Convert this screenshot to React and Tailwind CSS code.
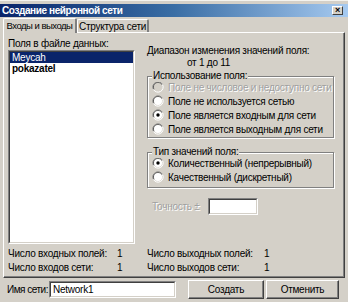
import React from 'react';

const font = { fontFamily: '"Liberation Sans", Arial, sans-serif' };

const Radio = ({ checked, disabled }) => (
  <svg width="12" height="12" viewBox="0 0 12 12" className="shrink-0">
    <path d="M10.5 3.5A5 5 0 0 0 1.5 8.5" fill="none" stroke="#808080" strokeWidth="1" />
    <path d="M9.5 3.8A4 4 0 0 0 2.3 8.2" fill="none" stroke="#404040" strokeWidth="1" />
    <circle cx="6" cy="6" r="4" fill={disabled ? '#d4d0c8' : '#fff'} />
    <path d="M1.5 8.5A5 5 0 0 0 10.5 3.5" fill="none" stroke="#fff" strokeWidth="1" />
    {checked && <circle cx="6" cy="6" r="1.7" fill="#000" />}
  </svg>
);

const RadioRow = ({ label, checked, disabled }) => (
  <div className="flex items-center gap-[4px] h-[14px]">
    <Radio checked={checked} disabled={disabled} />
    <span className={disabled ? 'text-[#a0a0a0] [text-shadow:1px_1px_0_#fff]' : 'text-black'}>{label}</span>
  </div>
);

const GroupBox = ({ title, children, className = '' }) => (
  <div className={`relative border border-[#808080] shadow-[inset_1px_1px_0_#fff,1px_1px_0_#fff] ${className}`}>
    <span className="absolute -top-[8px] left-[4px] bg-[#d4d0c8] px-[1px] leading-[13px]">{title}</span>
    {children}
  </div>
);

const Sunken = ({ className = '', children }) => (
  <div className={`border border-t-[#808080] border-l-[#808080] border-b-white border-r-white ${className}`}>
    <div className="h-full border border-t-[#404040] border-l-[#404040] border-b-[#d4d0c8] border-r-[#d4d0c8] bg-white">
      {children}
    </div>
  </div>
);

const Button = ({ children, className = '' }) => (
  <button className={`h-[19px] bg-[#d4d0c8] border border-t-white border-l-white border-b-[#404040] border-r-[#404040] shadow-[inset_-1px_-1px_0_#808080] text-black leading-none ${className}`}>
    {children}
  </button>
);

export default function App() {
  return (
    <div className="w-[348px] h-[302px] overflow-hidden bg-[#d4d0c8] text-[10px] tracking-[-0.25px] whitespace-nowrap text-black pt-[3px] border-t border-[#f4f3ee]" style={font}>
      <div className="h-[13px] flex items-center justify-between bg-gradient-to-r from-[#0a246a] via-[#3a6ea5] to-[#a6caf0] pl-[2px] pr-[5px]">
        <span className="text-white font-bold leading-none tracking-[-0.4px]">Создание нейронной сети</span>
        <div className="w-[11px] h-[9px] bg-[#d4d0c8] border border-t-white border-l-white border-b-[#404040] border-r-[#404040] flex items-center justify-center text-[9px] font-bold leading-none">
          ×
        </div>
      </div>

      <div className="flex px-[3px] pt-[2px] h-[15px] items-end relative z-10">
        <div className="w-[74px] h-[15px] -mb-[1px] flex items-center justify-center bg-[#d4d0c8] border-t border-l border-white border-r-2 border-r-[#808080] rounded-t-[2px] text-[9.5px] tracking-[-0.5px]">
          Входы и выходы
        </div>
        <div className="w-[72px] h-[13px] flex items-center justify-center bg-[#d4d0c8] border-t border-l border-white border-r-2 border-r-[#808080] rounded-t-[2px]">
          Структура сети
        </div>
      </div>

      <div className="mx-[3px] h-[246px] border border-t-white border-l-white border-b-[#404040] border-r-[#404040] shadow-[inset_-1px_-1px_0_#808080] flex flex-col px-[4px]">
        <div className="flex flex-1">
          <div className="w-[127px] flex flex-col pt-[5px]">
            <div className="leading-[12px] h-[12px]">Поля в файле данных:</div>
            <Sunken className="h-[194px]">
              <div className="bg-[#0a246a] text-white h-[11px] leading-[11px] px-[2px]">Meycah</div>
              <div className="h-[12px] leading-[12px] px-[2px] font-bold">pokazatel</div>
            </Sunken>
          </div>

          <div className="flex-1 ml-[12px] mr-[6px] flex flex-col pt-[12px]">
            <div className="leading-[12px]">Диапазон изменения значений поля:</div>
            <div className="leading-[12px] pl-[40px]">от 1 до 11</div>

            <GroupBox title="Использование поля:" className="mt-[7px] pt-[3px] pb-[1px] pl-[4px]">
              <RadioRow label="Поле не числовое и недоступно сети" disabled />
              <RadioRow label="Поле не используется сетью" />
              <RadioRow label="Поле является входным для сети" checked />
              <RadioRow label="Поле является выходным для сети" />
            </GroupBox>

            <GroupBox title="Тип значений поля:" className="mt-[14px] pt-[3px] pb-[3px] pl-[4px]">
              <RadioRow label="Количественный (непрерывный)" checked />
              <RadioRow label="Качественный (дискретный)" />
            </GroupBox>

            <div className="flex items-center mt-[10px] pl-[5px]">
              <span className="text-[#a0a0a0] [text-shadow:1px_1px_0_#fff] w-[56px]">Точность ±</span>
              <Sunken className="w-[50px] h-[17px]" />
            </div>
          </div>
        </div>

        <div className="flex pb-[3px]">
          <div className="w-[127px] flex flex-col">
            <div className="flex h-[14px] items-center"><span className="w-[109px]">Число входных полей:</span><span>1</span></div>
            <div className="flex h-[14px] items-center"><span className="w-[109px]">Число входов сети:</span><span>1</span></div>
          </div>
          <div className="ml-[12px] flex flex-col">
            <div className="flex h-[14px] items-center"><span className="w-[117px]">Число выходных полей:</span><span>1</span></div>
            <div className="flex h-[14px] items-center"><span className="w-[117px]">Число выходов сети:</span><span>1</span></div>
          </div>
        </div>
      </div>

      <div className="flex items-center h-[22px] pl-[7px] pt-[1px]">
        <span className="w-[42px] tracking-[-0.5px]">Имя сети:</span>
        <Sunken className="w-[127px] h-[17px]">
          <div className="pl-[2px] leading-[13px]">Network1</div>
        </Sunken>
        <div className="ml-[12px] flex gap-[2px]">
          <Button className="w-[76px]">Создать</Button>
          <Button className="w-[73px]">Отменить</Button>
        </div>
      </div>
    </div>
  );
}
